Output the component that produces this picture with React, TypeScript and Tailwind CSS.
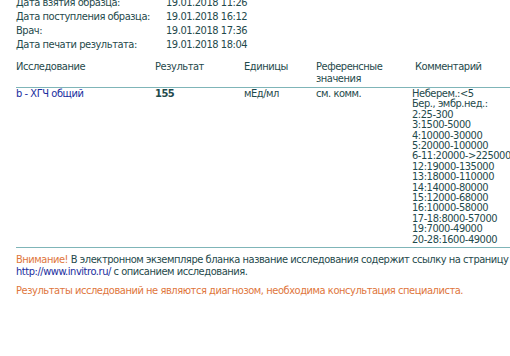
const info = [
  ['Дата взятия образца:', '19.01.2018 11:26'],
  ['Дата поступления образца:', '19.01.2018 16:12'],
  ['Врач:', '19.01.2018 17:36'],
  ['Дата печати результата:', '19.01.2018 18:04'],
];

const comments = [
  'Неберем.:<5',
  'Бер., эмбр.нед.:',
  '2:25-300',
  '3:1500-5000',
  '4:10000-30000',
  '5:20000-100000',
  '6-11:20000->225000',
  '12:19000-135000',
  '13:18000-110000',
  '14:14000-80000',
  '15:12000-68000',
  '16:10000-58000',
  '17-18:8000-57000',
  '19:7000-49000',
  '20-28:1600-49000',
];

export default function App() {
  return (
    <div className="h-[356px] overflow-hidden bg-white pl-[16px] text-[11px] tracking-[-0.45px] text-[#1f4a4c] [font-family:'DejaVu_Sans_Condensed','DejaVu_Sans',sans-serif] [font-stretch:condensed]">
      <div className="-mt-[4px]">
        {info.map(([label, value]) => (
          <div key={label} className="flex leading-[14px]">
            <span className="w-[150px] shrink-0">{label}</span>
            <span>{value}</span>
          </div>
        ))}
      </div>

      <div className="mt-[9px] flex border-b border-[#7fb5b8] pb-[2px] leading-[12px]">
        <div className="w-[139px] shrink-0">Исследование</div>
        <div className="w-[89px] shrink-0">Результат</div>
        <div className="w-[72px] shrink-0">Единицы</div>
        <div className="w-[96px] shrink-0">
          Референсные
          <br />
          значения
        </div>
        <div className="pl-[3px]">Комментарий</div>
      </div>

      <div className="flex border-b border-[#7fb5b8] pt-[1px] pb-[2px] leading-[10.4px]">
        <div className="w-[139px] shrink-0 text-[#1a2d9e]">b - ХГЧ общий</div>
        <div className="w-[89px] shrink-0 font-bold">155</div>
        <div className="w-[72px] shrink-0">мЕд/мл</div>
        <div className="w-[96px] shrink-0">см. комм.</div>
        <div className="whitespace-nowrap">
          {comments.map((c) => (
            <div key={c}>{c}</div>
          ))}
        </div>
      </div>

      <p className="mt-[6px] whitespace-nowrap leading-[12px]">
        <span className="text-[#e0763c]">Внимание!</span> В электронном экземпляре бланка название
        исследования содержит ссылку на страницу с
        <br />
        <span className="text-[#1a2d9e]">http://www.invitro.ru/</span> с описанием исследования.
      </p>
      <p className="mt-[7px] whitespace-nowrap leading-[12px] text-[#e0763c]">
        Результаты исследований не являются диагнозом, необходима консультация специалиста.
      </p>
    </div>
  );
}
